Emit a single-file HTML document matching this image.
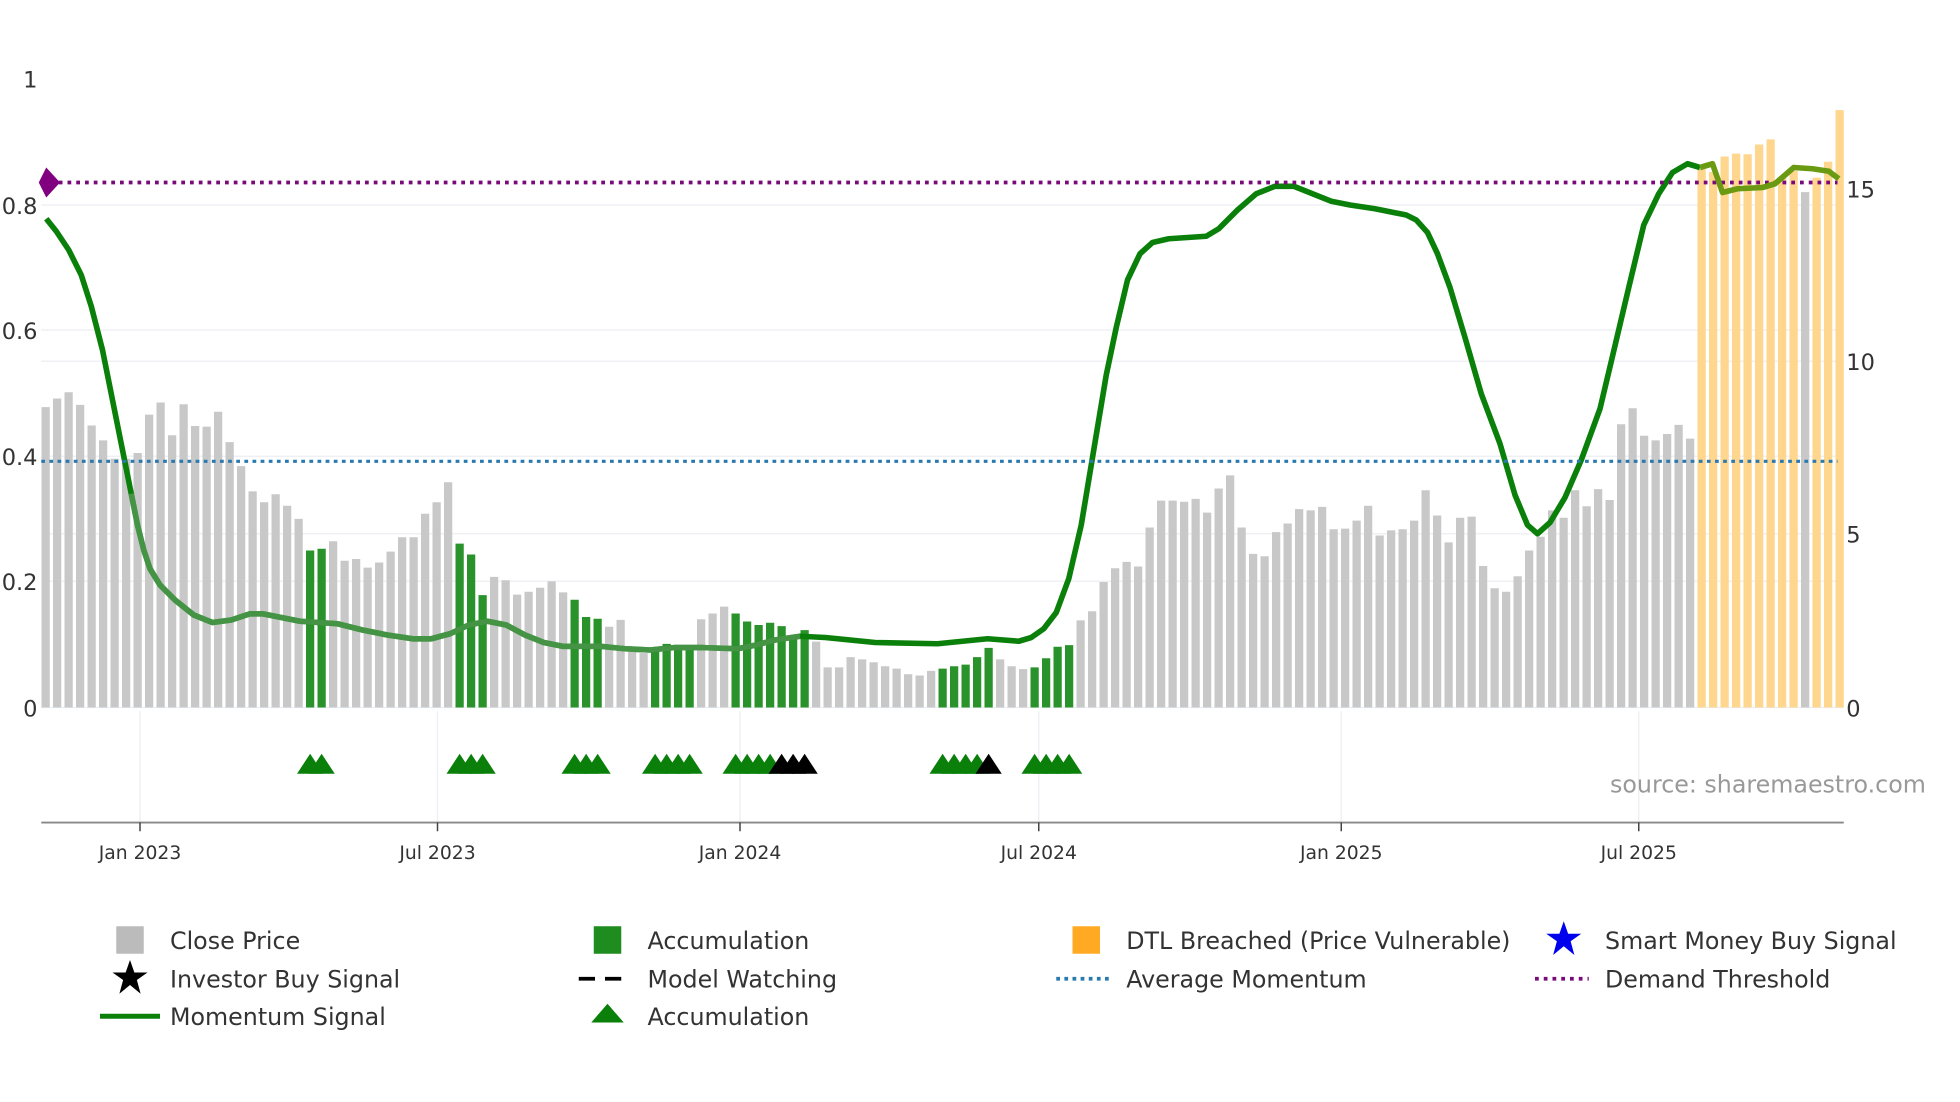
<!DOCTYPE html>
<html><head><meta charset="utf-8"><style>
html,body{margin:0;padding:0;background:#fff;}
svg{display:block;}
text{font-family:"DejaVu Sans","Liberation Sans",sans-serif;fill:#333;}
</style></head><body>
<svg id="s" width="1960" height="1102" viewBox="0 0 1568 881.6" xmlns="http://www.w3.org/2000/svg">
<rect width="1568" height="882" fill="#fff"/>
<g stroke="#ebeef2" stroke-width="1">
<line x1="33" x2="1475" y1="164" y2="164"/><line x1="33" x2="1475" y1="264" y2="264"/>
<line x1="33" x2="1475" y1="289" y2="289"/><line x1="33" x2="1475" y1="365" y2="365"/>
<line x1="33" x2="1475" y1="427" y2="427"/><line x1="33" x2="1475" y1="465" y2="465"/>
<line x1="33" x2="1475" y1="566" y2="566"/>
<line x1="112" x2="112" y1="569" y2="658"/><line x1="350" x2="350" y1="569" y2="658"/>
<line x1="592" x2="592" y1="569" y2="658"/><line x1="831" x2="831" y1="569" y2="658"/>
<line x1="1073" x2="1073" y1="569" y2="658"/><line x1="1311" x2="1311" y1="569" y2="658"/>
</g>
<g id="bars"></g>
<path id="mA" fill="none" stroke="#0a800a" stroke-width="4.5" stroke-linejoin="round"/>
<line x1="33" x2="1470" y1="369" y2="369" stroke="#2a7ab0" stroke-width="2.5" stroke-dasharray="3,3.5"/>
<line x1="33" x2="1470" y1="146" y2="146" stroke="#7a0a7a" stroke-width="3" stroke-dasharray="3,4"/>
<polygon points="31,146 37,134 48,146 37,158" fill="#800080"/>
<g id="tri"></g>
<line x1="33" x2="1475" y1="658" y2="658" stroke="#888" stroke-width="1.5"/>
<g stroke="#444" stroke-width="1.2">
<line x1="112" x2="112" y1="658" y2="665"/><line x1="350" x2="350" y1="658" y2="665"/>
<line x1="592" x2="592" y1="658" y2="665"/><line x1="831" x2="831" y1="658" y2="665"/>
<line x1="1073" x2="1073" y1="658" y2="665"/><line x1="1311" x2="1311" y1="658" y2="665"/>
</g>
<g font-size="15" text-anchor="middle">
<text x="112" y="687">Jan 2023</text><text x="350" y="687">Jul 2023</text>
<text x="592" y="687">Jan 2024</text><text x="831" y="687">Jul 2024</text>
<text x="1073" y="687">Jan 2025</text><text x="1311" y="687">Jul 2025</text>
</g>
<g font-size="18" text-anchor="end">
<text x="30" y="70">1</text><text x="30" y="171">0.8</text><text x="30" y="271">0.6</text>
<text x="30" y="372">0.4</text><text x="30" y="472">0.2</text><text x="30" y="573">0</text>
</g>
<g font-size="18">
<text x="1477" y="158">15</text><text x="1477" y="296">10</text><text x="1477" y="434">5</text><text x="1477" y="573">0</text>
</g>
<text x="1288" y="634" font-size="19" style="fill:#999">source: sharemaestro.com</text>
<g font-size="19">
<rect x="93" y="741" width="22" height="22" fill="#bbb"/>
<text x="136" y="759">Close Price</text>
<polygon points="104,768 107.5,778 118,778 109.5,784 112.5,795 104,788 95.5,795 98.5,784 90,778 100.5,778" fill="#000"/>
<text x="136" y="790">Investor Buy Signal</text>
<line x1="80" x2="128" y1="813" y2="813" stroke="#0a800a" stroke-width="4"/>
<text x="136" y="820">Momentum Signal</text>
<rect x="475" y="741" width="22" height="22" fill="#1f8c1f"/>
<text x="518" y="759">Accumulation</text>
<line x1="463" x2="505" y1="783" y2="783" stroke="#000" stroke-width="3" stroke-dasharray="13,8"/>
<text x="518" y="790">Model Watching</text>
<polygon points="486,803 499,818 473,818" fill="#0a800a"/>
<text x="518" y="820">Accumulation</text>
<rect x="858" y="741" width="22" height="22" fill="#ffaa22"/>
<text x="901" y="759">DTL Breached (Price Vulnerable)</text>
<line x1="845" x2="889" y1="783" y2="783" stroke="#2a7ab0" stroke-width="3" stroke-dasharray="3,3.5"/>
<text x="901" y="790">Average Momentum</text>
<polygon points="1251,737 1254.5,747 1265,747 1256.5,753 1259.5,764 1251,757 1242.5,764 1245.5,753 1237,747 1247.5,747" fill="#0000ee"/>
<text x="1284" y="759">Smart Money Buy Signal</text>
<line x1="1228" x2="1271" y1="783" y2="783" stroke="#7a0a7a" stroke-width="3" stroke-dasharray="3,4"/>
<text x="1284" y="790">Demand Threshold</text>
</g>
</svg>
<script>
(function(){
var NS="http://www.w3.org/2000/svg";
var z=[710,695,684,706,742,768,800,800,790,723,702,759,705,743,744,718,771,813,857,876,862,882,905,
960,957,
944,978,975,990,981,962,937,937,896,876,841,
948,967,1038,
1006,1012,1037,1032,1025,1014,1033,
1046,1076,1079,
1093,1081,1137,1139,
1131,1123,1131,1125,
1080,1070,1058,
1070,1084,1090,1086,1092,1110,1099,
1119,1164,1164,1146,1150,1155,1162,1166,1176,1178,1170,
1166,1162,1159,1146,1130,
1150,1162,1167,
1164,1148,1128,1125,
1082,1066,1015,991,980,988,920,873,873,875,870,894,852,829,920,966,970,928,913,888,890,884,923,922,908,882,934,925,923,908,855,899,946,903,901,987,1026,1032,1005,960,936,890,903,855,883,853,872,740,712,760,768,757,741,765,
295,300,273,268,269,252,243,310,298,335,310,282,192];
var green=[[23,24],[36,38],[46,48],[53,56],[60,66],[78,82],[86,89]];
function isG(i){for(var k=0;k<green.length;k++)if(i>=green[k][0]&&i<=green[k][1])return true;return false;}
var g=document.getElementById("bars"),h="";
for(var i=0;i<z.length;i++){
 var x=36.5+i*9.2-3.3,top=z[i]/2.18,col="#c8c8c8";
 if(isG(i))col="#2a922a";
 if(i>=144&&i!=153)col="#ffd68e";
 h+='<rect x="'+x.toFixed(1)+'" y="'+top.toFixed(1)+'" width="6.6" height="'+(566-top).toFixed(1)+'" fill="'+col+'"/>';
}
g.innerHTML=h;
var pts=[[37,175],[45,185],[55,200],[65,220],[73,245],[82,280],[90,320],[98,360],[105,395],[110,420],[115,440],[120,455],[128,468],[140,480],[155,492],[170,498],[185,496],[200,491],[210,491],[225,494],[240,497],[270,499],[290,504],[310,508],[330,511],[345,511],[360,507],[375,500],[390,497],[405,500],[420,508],[435,514],[450,517],[480,517],[500,519],[520,520],[540,518],[560,518],[590,519],[605,516],[620,512],[640,509],[660,510],[700,514],[750,515],[790,511],[815,513],[825,510],[835,503],[845,490],[855,463],[865,420],[875,360],[885,300],[893,262],[902,224],[912,203],[922,194],[935,191],[965,189],[975,183],[990,168],[1005,155],[1020,149],[1035,149],[1050,155],[1065,161],[1080,164],[1100,167],[1125,172],[1133,176],[1142,186],[1150,203],[1160,230],[1172,270],[1185,315],[1200,355],[1212,396],[1222,420],[1230,427],[1240,418],[1252,398],[1265,368],[1280,327],[1290,285],[1303,230],[1315,180],[1327,155],[1338,138],[1350,131],[1360,134]];
function P(a){return "M"+a.map(function(p){return p[0]+","+p[1];}).join(" L");}
document.getElementById("mA").setAttribute("d",P(pts));
var svg=document.getElementById("s");
function path(d,c,o){var e=document.createElementNS(NS,"path");e.setAttribute("d",d);e.setAttribute("fill","none");e.setAttribute("stroke",c);e.setAttribute("stroke-width","4.5");e.setAttribute("stroke-linejoin","round");if(o)e.setAttribute("stroke-opacity",o);svg.insertBefore(e,document.getElementById("tri"));}
var fade=pts.filter(function(p){return p[0]>=100&&p[0]<=655;});
path(P(fade),"#5a9a5a",0.75);
path(P([[1360,134],[1370,131],[1378,154],[1390,151],[1410,150],[1420,147],[1435,134],[1450,135],[1463,137],[1471,143]]),"#6a9a12");
var t=document.getElementById("tri"),th="";
function tri(i,c){var x=36.5+i*9.2;return '<polygon points="'+(x-10.5)+',619 '+x+',603 '+(x+10.5)+',619" fill="'+c+'"/>';}
var gi=[23,24,36,37,38,46,47,48,53,54,55,56,60,61,62,63,78,79,80,81,86,87,88,89],bi=[64,65,66,82];
gi.forEach(function(i){th+=tri(i,"#0a800a");});bi.forEach(function(i){th+=tri(i,"#000");});
t.innerHTML=th;
})();
</script>
</body></html>
